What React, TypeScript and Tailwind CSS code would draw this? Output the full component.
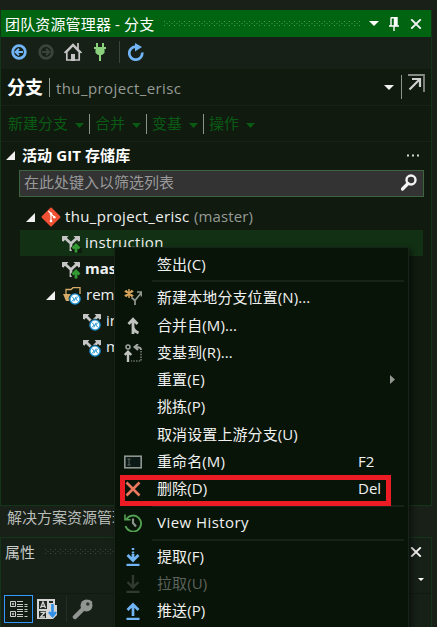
import type { ReactNode } from "react";

const FONT = "font-['Open_Sans','Noto_Sans_CJK_SC',sans-serif]";

function Dots({ id, color, className }: { id: string; color: string; className: string }) {
  return (
    <svg className={className} height="6">
      <pattern id={id} width="5" height="6" patternUnits="userSpaceOnUse">
        <rect x="0" y="0" width="1" height="1" fill={color} />
        <rect x="2.5" y="2" width="1" height="1" fill={color} />
        <rect x="0" y="4" width="1" height="1" fill={color} />
      </pattern>
      <rect width="100%" height="6" fill={`url(#${id})`} />
    </svg>
  );
}

function Caret({ className = "", size = 9 }: { className?: string; size?: number }) {
  return (
    <svg className={`shrink-0 ${className}`} width={size} height="5" viewBox="0 0 10 5" preserveAspectRatio="none">
      <path d="M0 0H10L5 5Z" fill="currentColor" />
    </svg>
  );
}

function Expander() {
  return (
    <svg className="shrink-0" width="9" height="9" viewBox="0 0 9 9">
      <path d="M9 0V9H0Z" fill="#f0f0f0" />
    </svg>
  );
}

function Close({ className = "" }: { className?: string }) {
  return (
    <svg className={`shrink-0 ${className}`} width="12" height="10" viewBox="0 0 12 10">
      <path d="M1.2 .3L10.8 9.7M10.8 .3L1.2 9.7" stroke="#f1f1f1" strokeWidth="1.9" />
    </svg>
  );
}

function BranchIcon({ badge }: { badge: "up" | "remote" }) {
  return (
    <svg className="shrink-0" width="20" height="19" viewBox="0 0 20 19">
      <path d="M0 2H6.5L1 8ZM18 2H11.5L17 8Z" fill="#c5c5c5" />
      <path d="M1 3V7M17 3V7" stroke="#c5c5c5" strokeWidth="2" />
      {badge === "up" ? (
        <>
          <path d="M3 4L9 9.5V17M15 4L9 9.5" fill="none" stroke="#c5c5c5" strokeWidth="2.8" />
          <path d="M8.5 14L14 8L20 14V19H11Z" fill="#101a0f" />
          <path d="M14 18.5V12M10.5 14.5L14 11L17.5 14.5" fill="none" stroke="#339933" strokeWidth="2.8" />
        </>
      ) : (
        <>
          <path d="M3 4L8 9M15 4L11 8" fill="none" stroke="#c5c5c5" strokeWidth="2.8" />
          <RemoteBadge cx={12} cy={13} />
        </>
      )}
    </svg>
  );
}

function RemoteBadge({ cx, cy }: { cx: number; cy: number }) {
  return (
    <g transform={`translate(${cx} ${cy})`}>
      <circle r="6.3" fill="#101a0f" />
      <circle r="5.1" fill="#ffffff" stroke="#1b8fd0" strokeWidth="1.4" />
      <path d="M-3 -2.4L-.8 0L-3 2.4M3 -2.4L.8 0L3 2.4M-1.2 2.4L1.2 -2.4" stroke="#1b8fd0" strokeWidth="1" fill="none" />
    </g>
  );
}

function FolderIcon() {
  return (
    <svg className="shrink-0" width="20" height="19" viewBox="0 0 20 19">
      <path d="M3 13V3.5H8L10 1.7H17V8" fill="none" stroke="#d7ac6a" strokeWidth="1.3" />
      <path d="M0 8H8V15H3Z" fill="#d7ac6a" />
      <RemoteBadge cx={12} cy={13} />
    </svg>
  );
}

function GitLogo() {
  return (
    <svg className="shrink-0" width="20" height="20" viewBox="0 0 20 20">
      <rect x="3" y="3" width="14" height="14" rx="1" transform="rotate(45 10 10)" fill="#f05033" />
      <path d="M7.3 3.8L10 6.5V14M10 7L13.5 10.3" stroke="#fff" strokeWidth="1.2" fill="none" />
      <circle cx="10" cy="6.7" r="1.3" fill="#fff" />
      <circle cx="10" cy="14" r="1.3" fill="#fff" />
      <circle cx="13.3" cy="10.2" r="1.3" fill="#fff" />
    </svg>
  );
}

function NavIcon({ right = false }: { right?: boolean }) {
  const color = right ? "#3b433b" : "#72b5f7";
  return (
    <svg className="shrink-0" width="16" height="16" viewBox="0 0 16 16">
      <circle cx="8" cy="8" r="6.3" fill="none" stroke={color} strokeWidth="2.8" />
      <path
        d={right ? "M4 8H11M8 4.7L11.4 8L8 11.3" : "M12 8H5M8 4.7L4.6 8L8 11.3"}
        fill="none"
        stroke={color}
        strokeWidth="2"
      />
    </svg>
  );
}

const newBranch = (
  <>
    <path d="M5 0V9M.7 2.2L9.3 6.8M.7 6.8L9.3 2.2M1.8 1.2L8.2 7.8M8.2 1.2L1.8 7.8" stroke="#d9a55c" strokeWidth="1.5" />
    <path d="M11 16V11.5L17 4M11 11.5L7.5 8.5M13 3H17.5V7.5" fill="none" stroke="#929792" strokeWidth="1.7" />
  </>
);
const merge = (
  <path d="M9 17V2M4.5 7L9 2.2L13.5 7M9 9C9 13 11 14.5 14.5 16" fill="none" stroke="#bfc2bf" strokeWidth="2.8" />
);
const rebase = (
  <>
    <circle cx="4" cy="3" r="2" fill="none" stroke="#a0a5a0" strokeWidth="1.5" />
    <path d="M4 18V8M.7 11L4 7.7L7.3 11" fill="none" stroke="#c0c3c0" strokeWidth="2.4" />
    <path d="M17 6C17 3.5 15.5 3 11 3M14 0L10.5 3L14 6" fill="none" stroke="#a0a5a0" strokeWidth="2" />
    <path d="M17 7V17H7" fill="none" stroke="#969b96" strokeWidth="1.2" strokeDasharray="1.5 1.2" />
  </>
);
const rename = (
  <>
    <rect x=".8" y="3.2" width="16.4" height="11.6" fill="#0b1a17" stroke="#8f958f" strokeWidth="1.6" />
    <path d="M3.5 6H6.5M5 6V12M3.5 12H6.5" stroke="#69716a" strokeWidth=".9" />
  </>
);
const remove = <path d="M2.5 2.5L15.5 15.5M15.5 2.5L2.5 15.5" stroke="#ed7860" strokeWidth="2.6" />;
const history = (
  <>
    <path d="M2.5 5A8 8 0 1 1 1.5 12" fill="none" stroke="#54a254" strokeWidth="1.8" />
    <path d="M1 .5V5.8H6.5" fill="none" stroke="#54a254" strokeWidth="1.6" />
    <path d="M9 4.5V9L12 12.5" fill="none" stroke="#8d948d" strokeWidth="2.1" />
  </>
);
const fetchIcon = (
  <>
    <path d="M9 0V2M9 3.5V5.5" stroke="#72b5f7" strokeWidth="2.4" />
    <path d="M9 6V12.5M3.5 7L9 12.5L14.5 7" fill="none" stroke="#72b5f7" strokeWidth="2.8" />
    <path d="M2.5 17H15.5" stroke="#72b5f7" strokeWidth="2.4" />
  </>
);
const pull = (
  <path d="M9 0V12.5M3.5 7L9 12.5L14.5 7M2.5 17H15.5" fill="none" stroke="#303a30" strokeWidth="2.4" />
);
const push = (
  <path d="M9 14V2.5M3.5 8L9 2.5L14.5 8M2.5 17H15.5" fill="none" stroke="#72b5f7" strokeWidth="2.7" />
);

type ItemProps = {
  label: string;
  icon?: ReactNode;
  shortcut?: string;
  submenu?: boolean;
  disabled?: boolean;
  track?: string;
};

function MenuItem({ label, icon, shortcut, submenu, disabled, track = "tracking-[0.1px]" }: ItemProps) {
  return (
    <div className={`flex h-[27.25px] items-center pl-2 ${disabled ? "text-[#5c625c]" : "text-[#f1f1f1]"}`}>
      <svg className="shrink-0" width="18" height="18" viewBox="0 0 18 18">
        {icon}
      </svg>
      <span className={`mb-[2px] ml-[15px] w-[201px] shrink-0 leading-5 ${track}`}>{label}</span>
      <span className="mb-[2px] w-8 shrink-0">{shortcut}</span>
      {submenu && (
        <svg className="mb-px" width="5" height="9" viewBox="0 0 5 9">
          <path d="M0 0L5 4.5L0 9Z" fill="#929792" />
        </svg>
      )}
    </div>
  );
}

function Separator() {
  return (
    <div className="h-[6.5px] pt-[2px] pr-1 pl-[36px]">
      <div className="h-[2px] bg-[#172219]" />
    </div>
  );
}

function ContextMenu() {
  return (
    <div className="absolute top-[247px] left-[114px] h-[381px] w-[295px] border border-[#172219] bg-[#071407] pt-[3px] pl-px text-[15px] shadow-[3px_2px_5px_rgba(0,0,0,0.45)]">
      <MenuItem label="签出(C)" />
      <Separator />
      <MenuItem label="新建本地分支位置(N)..." icon={newBranch} />
      <MenuItem label="合并自(M)..." icon={merge} />
      <MenuItem label="变基到(R)..." icon={rebase} />
      <MenuItem label="重置(E)" submenu />
      <MenuItem label="挑拣(P)" />
      <MenuItem label="取消设置上游分支(U)" />
      <MenuItem label="重命名(M)" icon={rename} shortcut="F2" />
      <MenuItem label="删除(D)" icon={remove} shortcut="Del" />
      <Separator />
      <MenuItem label="View History" icon={history} track="tracking-[0.45px]" />
      <Separator />
      <MenuItem label="提取(F)" icon={fetchIcon} />
      <MenuItem label="拉取(U)" icon={pull} disabled />
      <MenuItem label="推送(P)" icon={push} />
      <div className="absolute top-[227px] left-[5px] h-[31px] w-[271px] border-[5px] border-[#ed1c24]" />
    </div>
  );
}

function TitleBar() {
  return (
    <div className="flex h-[27px] items-center bg-[#006410] pr-[10px] pl-1 text-white">
      <span className="w-[159px] shrink-0 text-[15px] leading-5 tracking-[0.15px] whitespace-nowrap">团队资源管理器 - 分支</span>
      <Dots id="title-dots" color="#4b9854" className="w-[196px] shrink-0" />
      <Caret className="ml-[9px]" size={10} />
      <svg className="ml-[10px] shrink-0" width="10" height="14" viewBox="0 0 10 14">
        <path d="M2 .8H8M2 .5V8.5M5.5 0H8V8.5H5.5ZM0 9H10M5 9V14" fill="none" stroke="#fff" strokeWidth="1.4" />
        <rect x="6" y="1" width="2" height="8" fill="#fff" />
      </svg>
      <Close className="ml-[11px]" />
    </div>
  );
}

function Toolbar() {
  return (
    <div className="flex h-8 items-center bg-[#162017] pb-[2px] pl-[10px]">
      <NavIcon />
      <div className="ml-[11px] flex">
        <NavIcon right />
      </div>
      <svg className="ml-[10px] shrink-0" width="18" height="18" viewBox="0 0 18 18">
        <path d="M2.8 9V17H15.2V9L9 2.5Z" fill="#162017" stroke="#c5c5c5" strokeWidth="1.7" />
        <path d="M.5 10L9 1.5L17.5 10M14 6V0" fill="none" stroke="#c5c5c5" strokeWidth="1.7" />
        <rect x="7" y="11" width="4" height="7" fill="#c5c5c5" />
      </svg>
      <svg className="ml-[12px] shrink-0" width="12" height="18" viewBox="0 0 12 18">
        <path d="M2 0H4V4H8V0H10V4H12V6H10.5V10L8 12H7V18H5V12H4L1.5 10V6H0V4H2Z" fill="#8bd07d" />
      </svg>
      <div className="ml-[13px] h-[22px] w-px bg-[#3c453d]" />
      <svg className="ml-2 shrink-0" width="17" height="18" viewBox="0 0 17 18">
        <path d="M7.5 3.7A6.5 6.5 0 1 0 14.2 9.5" fill="none" stroke="#72b5f7" strokeWidth="2.7" />
        <path d="M7 0L14 4L7 8.5Z" fill="#72b5f7" />
      </svg>
    </div>
  );
}

function Commands() {
  return (
    <div className="flex h-9 items-center border-b border-[#172219] pl-[7px] text-[15px] text-[#0a5a14]">
      <span className="mb-px leading-5">新建分支</span>
      <Caret className="mt-1 ml-[7px]" />
      <div className="ml-[5px] h-5 w-px bg-[#8d928d]" />
      <span className="mb-px ml-[5px] leading-5">合并</span>
      <Caret className="mt-1 ml-[7px]" />
      <div className="ml-[5px] h-5 w-px bg-[#8d928d]" />
      <span className="mb-px ml-[5px] leading-5">变基</span>
      <Caret className="mt-1 ml-[7px]" />
      <div className="ml-[5px] h-5 w-px bg-[#8d928d]" />
      <span className="mb-px ml-[5px] leading-5">操作</span>
      <Caret className="mt-1 ml-[7px]" />
    </div>
  );
}

function Tree() {
  return (
    <div className="mt-[7px] text-[15px] text-[#f1f1f1]">
      <div className="flex h-[26px] items-center pl-[25px]">
        <Expander />
        <div className="ml-[6px] flex">
          <GitLogo />
        </div>
        <span className="mb-[3px] ml-1 w-[129px] leading-5 tracking-[0.35px]">thu_project_erisc</span>
        <span className="mb-[3px] leading-5 tracking-[0.1px] text-[#969b96]">(master)</span>
      </div>
      <div className="mr-[8px] ml-[19px] flex h-[26px] items-center bg-[#123014] pl-[42px]">
        <BranchIcon badge="up" />
        <span className="mb-[2px] ml-[3px] leading-5 tracking-[0.3px]">instruction</span>
      </div>
      <div className="flex h-[26px] items-center pl-[61px]">
        <BranchIcon badge="up" />
        <span className="mb-[2px] ml-[3px] leading-5 font-bold">master</span>
      </div>
      <div className="flex h-[26px] items-center pl-[45px]">
        <Expander />
        <div className="ml-[8px] flex">
          <FolderIcon />
        </div>
        <span className="mb-[2px] ml-[3px] leading-5">remotes</span>
      </div>
      <div className="flex h-[26px] items-center pl-[82px]">
        <BranchIcon badge="remote" />
        <span className="mb-[2px] ml-[3px] leading-5">instruction</span>
      </div>
      <div className="flex h-[26px] items-center pl-[82px]">
        <BranchIcon badge="remote" />
        <span className="mb-[2px] ml-[3px] leading-5">master</span>
      </div>
    </div>
  );
}

function PropertiesPanel() {
  return (
    <div className="flex h-[90px] w-[432px] flex-col border-t border-r border-l border-[#15351a] bg-[#162017]">
      <div className="flex h-7 items-center pr-[9px] pb-px pl-1">
        <span className="w-10 text-[15px] leading-5 text-[#c9ccc9]">属性</span>
        <Dots id="prop-dots" color="#364b38" className="w-[320px] shrink-0" />
        <Close className="ml-auto" />
      </div>
      <div className="flex h-7 items-center justify-end border-b border-[#101a11] pr-[7px] text-white">
        <Caret size={6} className="h-[3px]" />
      </div>
      <div className="flex items-center pt-[1px] pl-[3px]">
        <div className="flex h-7 w-[29px] items-center justify-center border border-[#3399ff] bg-[#111b12]">
          <svg width="18" height="18" viewBox="0 0 18 18">
            <path d="M.5 1.5H5.5V6.5H.5ZM.5 11.5H5.5V16.5H.5ZM3 2.8V5.2M1.8 4H4.2M3 12.8V15.2M1.8 14H4.2" fill="none" stroke="#d0d0d0" />
            <path d="M7 1.5H13M7 4.5H13M7 6.5H13M7 9.5H13M7 11.5H13M7 14.5H13M7 16.5H13M14.5 4.5H17.5M14.5 6.5H17.5M14.5 9.5H17.5M14.5 11.5H17.5M14.5 16.5H17.5" stroke="#c9ccc9" />
          </svg>
        </div>
        <svg className="ml-1 shrink-0" width="21" height="21" viewBox="0 0 21 21">
          <path d="M0 0H18V6H20V16L16 20H0Z" fill="#d5d5d5" />
          <path d="M2 2H10V10H2ZM2 12H9V19H2Z" fill="#202820" />
          <path d="M3.5 9L6 3L8.5 9M4.5 7.3H7.5M3.5 13.3H7.8L3.5 18H8" fill="none" stroke="#d5d5d5" strokeWidth="1.3" />
          <path d="M12 2H16V4H12Z" fill="#202820" />
          <path d="M15.5 5V16M12 13L15.5 17L19 13" fill="none" stroke="#2f8fe6" strokeWidth="2.6" />
        </svg>
        <div className="ml-2 h-[26px] w-px bg-[#242d25]" />
        <svg className="ml-[5px] shrink-0" width="22" height="21" viewBox="0 0 22 21">
          <path d="M3 18L12 9" stroke="#929692" strokeWidth="4.5" strokeLinecap="round" />
          <circle cx="14.5" cy="6.5" r="6" fill="#929692" />
          <path d="M14 6.5L17 .5L20.5 3L18 7Z" fill="#929692" />
          <circle cx="15.8" cy="5" r="1.8" fill="#303830" />
        </svg>
      </div>
    </div>
  );
}

export default function App() {
  return (
    <div className={`relative h-[627px] w-[437px] overflow-hidden bg-[#182018] pt-[10px] whitespace-nowrap ${FONT}`}>
      <div className="h-[496px] w-[432px] border-r border-b border-l border-[#15351a] bg-[#101a0f]">
        <TitleBar />
        <Toolbar />
        <div className="flex h-[37px] items-center border-b border-[#172219] pr-[6px] pl-[6px]">
          <span className="text-[18px] leading-6 font-bold text-white">分支</span>
          <div className="ml-[6px] h-[19px] w-px bg-[#969b96]" />
          <span className="mt-px ml-[6px] text-[15px] leading-5 tracking-[0.4px] text-[#969b96]">thu_project_erisc</span>
          <Caret className="ml-auto text-[#f1f1f1]" size={10} />
          <div className="ml-[7px] h-6 w-px bg-[#8d928d]" />
          <svg className="mb-2 ml-[6px] shrink-0" width="17" height="18" viewBox="0 0 17 18">
            <path d="M0 1H16V18" fill="none" stroke="#858a85" strokeWidth="1.8" />
            <path d="M1.5 15.5L12 5M4 5H12V13" fill="none" stroke="#d0d2d0" strokeWidth="2.2" />
          </svg>
        </div>
        <Commands />
        <div className="flex h-7 items-center pr-[11px] pb-px pl-[5px]">
          <Expander />
          <span className="mb-px ml-[7px] text-[15px] leading-5 font-bold tracking-[0.1px] text-white">活动 GIT 存储库</span>
          <svg className="ml-auto" width="13" height="3" viewBox="0 0 13 3">
            <path d="M0 .5H2V2.5H0ZM5 .5H7V2.5H5ZM10 .5H12V2.5H10Z" fill="#d5d5d5" />
          </svg>
        </div>
        <div className="mr-[7px] ml-[18px] flex h-[27px] items-center justify-between border border-[#3c653f] bg-[#333333] pr-[6px] pl-1">
          <span className="mb-[3px] text-[15px] leading-5 text-[#999999]">在此处键入以筛选列表</span>
          <svg className="mb-[2px]" width="16" height="17" viewBox="0 0 16 17">
            <circle cx="10" cy="6" r="4.5" fill="none" stroke="#f4f4f4" strokeWidth="2.4" />
            <path d="M7 9.5L1.5 15" stroke="#f4f4f4" strokeWidth="3.2" strokeLinecap="round" />
          </svg>
        </div>
        <Tree />
      </div>
      <div className="flex h-[31px] items-start pt-px pl-[7px] text-[15px] text-[#b9bdb9]">
        <span className="leading-5">解决方案资源管理器</span>
      </div>
      <PropertiesPanel />
      <ContextMenu />
    </div>
  );
}
